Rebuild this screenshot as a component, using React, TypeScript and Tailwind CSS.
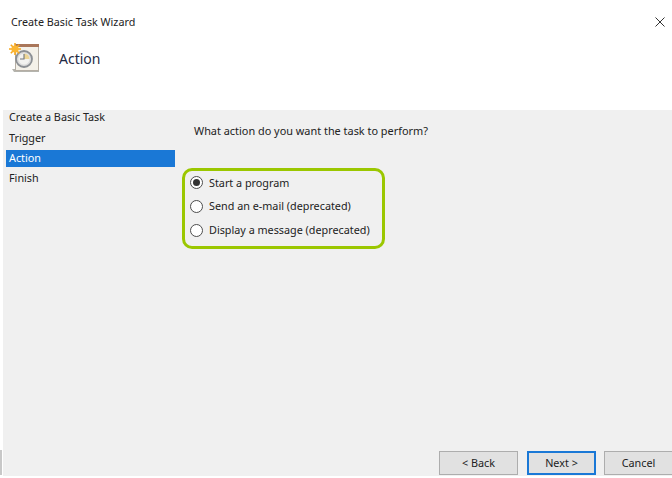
const font = "font-['Noto_Sans','Open_Sans',sans-serif]";

function TaskIcon() {
  return (
    <svg width="30" height="30" viewBox="0 0 30 30" className="-ml-[2px] shrink-0">
      <path d="M3 26 L5 29 H30 V26 Z" fill="#b4b4ae" />
      <rect x="6.5" y="1.5" width="23" height="26" fill="#f4f1e9" stroke="#b5aea4" />
      <rect x="6" y="1" width="24" height="3" fill="#a9765a" />
      <circle cx="15" cy="16" r="8" fill="#dcdcdc" stroke="#8b8f94" strokeWidth="1.8" />
      <circle cx="15" cy="16" r="5.6" fill="#f2f2f0" />
      <path d="M15 10.5 A5.5 5.5 0 0 1 20.5 16 H15 Z" fill="#ecd596" />
      <path d="M15 11 V16 H11" fill="none" stroke="#70757a" strokeWidth="1.1" />
      <g stroke="#f7a81e" strokeWidth="1.6">
        <path d="M6 0 V12 M0 6 H12 M1.8 1.8 L10.2 10.2 M10.2 1.8 L1.8 10.2" />
      </g>
      <circle cx="6" cy="6" r="3.6" fill="#fbb632" />
    </svg>
  );
}

function Radio({ label, checked }: { label: string; checked?: boolean }) {
  return (
    <label className="flex h-6 items-center gap-[6px]">
      <span className="flex h-[13px] w-[13px] items-center justify-center rounded-full border border-[#4d4d4d] bg-white">
        {checked && <span className="h-[7px] w-[7px] rounded-full bg-[#333333]" />}
      </span>
      <span className="text-[10.8px] text-[#222222]">{label}</span>
    </label>
  );
}

function WizardButton({ label, className }: { label: string; className: string }) {
  return (
    <button className={`flex h-6 items-center justify-center bg-[#e1e1e1] text-[10.8px] text-[#222222] ${className}`}>
      {label}
    </button>
  );
}

export default function App() {
  const steps = ['Create a Basic Task', 'Trigger', 'Action', 'Finish'];

  return (
    <div className={`relative flex h-[478px] w-[672px] flex-col overflow-hidden bg-white ${font}`}>
      {/* header */}
      <header className="relative h-[110px] shrink-0 px-[11px] pt-[14px]">
        <h1 className="text-[10.75px] leading-4 text-[#222222]">Create Basic Task Wizard</h1>
        <div className="mt-[13px] flex items-center gap-[20px]">
          <TaskIcon />
          <h2 className="text-[14px] text-[#1f2a44]">Action</h2>
        </div>
        <svg width="10" height="10" viewBox="0 0 10 10" className="absolute right-[7px] top-[17px]">
          <path d="M0.5 0.5 L9.5 9.5 M9.5 0.5 L0.5 9.5" stroke="#333333" strokeWidth="1" />
        </svg>
      </header>

      <div className="mb-[2px] ml-[3px] flex min-h-0 flex-1 bg-[#f0f0f0]">
        {/* steps */}
        <nav className="-mt-px flex w-[172px] shrink-0 flex-col gap-[3.3px] pl-[3px]">
          {steps.map((s) => (
            <div
              key={s}
              className={`flex h-[17px] items-center px-[3px] text-[10.8px] ${
                s === 'Action' ? 'bg-[#1a78d6] text-white' : 'text-[#222222]'
              }`}
            >
              {s}
            </div>
          ))}
        </nav>

        {/* content */}
        <main className="flex min-w-0 flex-1 flex-col pl-[7px] pt-[13px]">
          <p className="pl-[12px] text-[10.9px] leading-4 text-[#222222]">What action do you want the task to perform?</p>
          <div className="mt-[29px] flex h-[81px] w-[203px] flex-col justify-center rounded-[10px] border-[3px] border-[#9bc700] pb-1 pl-[5px]">
            <Radio label="Start a program" checked />
            <Radio label="Send an e-mail (deprecated)" />
            <Radio label="Display a message (deprecated)" />
          </div>
          <div className="mb-[1px] mt-auto flex justify-end">
            <WizardButton label="< Back" className="mr-[9px] w-[79px] border border-[#adadad]" />
            <WizardButton label="Next >" className="mr-2 w-[69px] border-2 border-[#1a78d6]" />
            <WizardButton label="Cancel" className="w-[68px] border border-r-0 border-[#adadad]" />
          </div>
        </main>
      </div>

      {/* sliver of the window behind, at the lower left edge */}
      <div className="absolute bottom-[3px] left-0 h-[25px] w-[2px] bg-[#c8c8c8]" />
    </div>
  );
}
